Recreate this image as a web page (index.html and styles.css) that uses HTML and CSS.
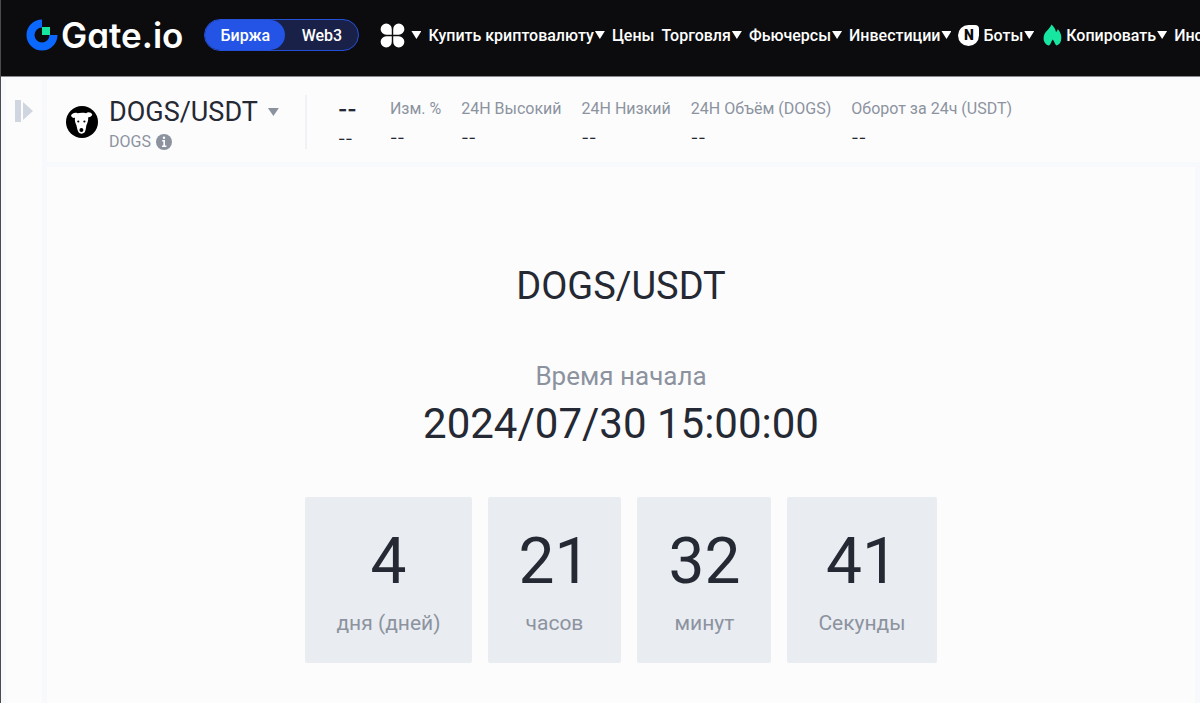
FILE: index.html
```html
<!DOCTYPE html>
<html lang="ru">
<head>
  <meta charset="UTF-8">
  <meta name="viewport" content="width=device-width, initial-scale=1.0">
  <title>DOGS/USDT | Gate.io</title>
  <link rel="stylesheet" href="styles.css">
</head>
<body>
  <header class="header">
    <a href="#" class="logo">
      <svg width="32" height="32" viewBox="0 0 32 32" aria-hidden="true">
        <path d="M16 0.5A15.5 15.5 0 1 0 31.5 16H23.5A7.5 7.5 0 1 1 16 8.5Z" fill="#0a68ff"/>
        <rect x="16" y="8" width="8" height="8" fill="#17e6a1"/>
      </svg>
      <span>Gate.io</span>
    </a>
    <div class="switch">
      <button type="button" class="switch-btn active">Биржа</button>
      <button type="button" class="switch-btn">Web3</button>
    </div>
    <nav class="nav">
      <a href="#" class="apps" aria-label="Меню">
        <svg width="25" height="25" viewBox="0 0 24 24" fill="#fff" aria-hidden="true">
          <path d="M6 0.5A5.3 5.3 0 0 1 11.3 6V11.3H6A5.4 5.4 0 0 1 6 0.5Z"/>
          <path d="M18 0.5A5.3 5.3 0 0 0 12.7 6V11.3H18A5.4 5.4 0 0 0 18 0.5Z"/>
          <path d="M6 23.5A5.3 5.3 0 0 0 11.3 18V12.7H6A5.4 5.4 0 0 0 6 23.5Z"/>
          <path d="M18 23.5A5.3 5.3 0 0 1 12.7 18V12.7H18A5.4 5.4 0 0 1 18 23.5Z"/>
        </svg>
        <i class="arrow"></i>
      </a>
      <a href="#">Купить криптовалюту<i class="arrow"></i></a>
      <a href="#">Цены</a>
      <a href="#">Торговля<i class="arrow"></i></a>
      <a href="#">Фьючерсы<i class="arrow"></i></a>
      <a href="#">Инвестиции<i class="arrow"></i></a>
      <a href="#"><span class="badge">N</span>Боты<i class="arrow"></i></a>
      <a href="#">
        <svg class="fire" width="19" height="22" viewBox="0 0 19 22" aria-hidden="true">
          <path d="M8.5 0.5C10.5 2 12.5 5 13 8C14 7.3 14.5 6.3 14.7 5C17 7.5 18.5 10.5 18.3 14C18.3 18 16.5 20.5 13.5 21.5C11.8 20.5 11.8 18 9.7 15.5C8 17.5 7.8 20.5 6 21.5C2.8 20.8 0.6 18 0.6 14.2C0.6 11.5 1.8 9 3.7 7C5.8 4.8 7.5 3 8.5 0.5Z" fill="#17e6a1"/>
        </svg>
        Копировать<i class="arrow"></i>
      </a>
      <a href="#">Институты<i class="arrow"></i></a>
    </nav>
  </header>

  <div class="page">
    <aside class="rail">
      <button type="button" class="expand" aria-label="Развернуть">
        <svg width="18" height="22" viewBox="0 0 18 22" fill="#d0d6df" aria-hidden="true">
          <rect width="6" height="22"/>
          <path d="M8 2L18 11L8 20Z"/>
        </svg>
      </button>
    </aside>

    <main class="main">
      <section class="ticker">
        <div class="pair">
          <svg class="coin" width="32" height="32" viewBox="0 0 32 32" aria-hidden="true">
            <circle cx="16" cy="16" r="16" fill="#000"/>
            <path d="M5 9.5C6.5 7 9 6.3 11.5 7.3C14 6.6 17.5 6.6 20 7.2C22 5.6 25 6 26.3 8.5C25.5 10.7 23.8 11.5 22.2 11.2C22.5 14.5 21.3 17 20.3 19.5C20 22 19.7 24.5 18.5 26.5C17 28 14 28 12.8 26.5C11.5 24.5 11 22 10.5 19.5C9.3 17 8.5 14.5 9 11.8C7.2 12.3 5.6 11.5 5 9.5Z" fill="#fff"/>
            <circle cx="12.3" cy="15.5" r="1.1"/>
            <circle cx="18.4" cy="15.5" r="1.1"/>
            <ellipse cx="15.4" cy="24" rx="2" ry="1.9"/>
          </svg>
          <div>
            <button type="button" class="pair-name">DOGS/USDT<i class="arrow"></i></button>
            <div class="pair-sub">
              DOGS
              <svg width="16" height="16" viewBox="0 0 16 16" aria-hidden="true">
                <circle cx="8" cy="8" r="8" fill="#8c939f"/>
                <path d="M6.2 6.7H8.2V12M6 12.2H10.4" stroke="#fff" stroke-width="1.6" fill="none"/>
                <circle cx="8" cy="3.8" r="1.2" fill="#fff"/>
              </svg>
            </div>
          </div>
        </div>
        <div class="price">
          <strong>--</strong>
          <span>--</span>
        </div>
        <dl class="stats">
          <div><dt>Изм. %</dt><dd>--</dd></div>
          <div><dt>24H Высокий</dt><dd>--</dd></div>
          <div><dt>24H Низкий</dt><dd>--</dd></div>
          <div><dt>24H Объём (DOGS)</dt><dd>--</dd></div>
          <div><dt>Оборот за 24ч (USDT)</dt><dd>--</dd></div>
        </dl>
      </section>

      <section class="launch">
        <h1>DOGS/USDT</h1>
        <p class="launch-label">Время начала</p>
        <p class="launch-date">2024/07/30 15:00:00</p>
        <div class="countdown">
          <div class="card"><b>4</b><span>дня (дней)</span></div>
          <div class="card"><b>21</b><span>часов</span></div>
          <div class="card"><b>32</b><span>минут</span></div>
          <div class="card"><b>41</b><span>Секунды</span></div>
        </div>
      </section>
    </main>
  </div>
</body>
</html>
```
FILE: styles.css
```css
* {
  box-sizing: border-box;
}

body {
  margin: 0;
  min-height: 100vh;
  display: flex;
  flex-direction: column;
  overflow-x: hidden;
  font-family: Roboto, "Noto Sans", sans-serif;
  color: #252933;
  background-color: #fcfcfd;
  border-left: 1px solid #4b4b50;
}

a {
  color: inherit;
  text-decoration: none;
}

button {
  border: none;
  padding: 0;
  background: none;
  font-family: inherit;
  color: inherit;
  cursor: pointer;
}

h1, p, dl, dd {
  margin: 0;
}

.arrow {
  display: inline-block;
  flex: none;
  width: 10px;
  height: 8px;
  margin-left: 1px;
  background-color: currentColor;
  clip-path: polygon(0 0, 100% 0, 50% 100%);
}

/* header */
.header {
  display: flex;
  align-items: center;
  height: 77px;
  padding: 0 0 6px 25px;
  overflow: hidden;
  white-space: nowrap;
  color: #fff;
  background-color: #0c0c0e;
  border-bottom: 1px solid #88888c;
}

.logo {
  display: flex;
  align-items: center;
  flex: none;
  gap: 3px;
  font-family: Inter, sans-serif;
  font-size: 35px;
  font-weight: 600;
  line-height: 40px;
  font-feature-settings: "cv11";
}

.switch {
  display: flex;
  flex: none;
  width: 155px;
  height: 32px;
  margin-left: 21px;
  border: 1px solid #2450d8;
  border-radius: 16px;
  background-color: #1a2149;
  overflow: hidden;
}

.switch-btn {
  flex: 1;
  font-size: 16px;
  font-weight: 500;
}

.switch-btn.active {
  flex: none;
  width: 80px;
  border-radius: 16px;
  background-color: #2354e6;
}

.nav {
  display: flex;
  align-items: center;
  flex: none;
  gap: 7px;
  margin-left: 21px;
  font-size: 16px;
  font-weight: 500;
}

.nav a {
  display: flex;
  align-items: center;
}

.apps .arrow {
  margin-left: 6px;
}

.badge {
  width: 21px;
  height: 21px;
  margin-right: 4px;
  border-radius: 50% 4px 50% 50%;
  font-size: 14px;
  font-weight: 900;
  line-height: 21px;
  text-align: center;
  color: #0c0c0e;
  background-color: #fff;
}

.fire {
  margin: 0 4px 0 2px;
}

/* page */
.page {
  display: flex;
  flex: 1;
  border-top: 3px solid #f8f9fc;
}

.rail {
  flex: none;
  width: 46px;
  padding: 20px 0 0 9px;
  border-left: 5px solid #f8f9fc;
  border-right: 5px solid #f8f9fc;
}

.main {
  flex: 1;
  display: flex;
  flex-direction: column;
  min-width: 0;
}

.ticker {
  display: flex;
  align-items: flex-start;
  height: 87px;
  padding: 15px 0 0 19px;
  border-bottom: 5px solid #f8f9fc;
  white-space: nowrap;
}

.pair {
  display: flex;
  gap: 11px;
  height: 54px;
  padding-right: 26px;
  border-right: 2px solid #f0f2f6;
}

.coin {
  margin-top: 11px;
}

.pair-name {
  display: flex;
  align-items: center;
  font-size: 27px;
  line-height: 34px;
}

.pair-name .arrow {
  width: 11px;
  margin-left: 10px;
  color: #8c939f;
}

.pair-sub {
  display: flex;
  align-items: center;
  gap: 5px;
  font-size: 16px;
  line-height: 26px;
  color: #8c939f;
}

.price {
  display: flex;
  flex-direction: column;
  width: 83px;
  padding-left: 31px;
  font-family: Inter, sans-serif;
  line-height: 29px;
}

.price strong {
  font-size: 20px;
}

.price span {
  font-size: 16px;
}

.stats {
  display: flex;
  gap: 20px;
  font-size: 16px;
  line-height: 28px;
}

.stats dt {
  color: #8c939f;
}

.stats dd {
  font-family: Inter, sans-serif;
}

.launch {
  flex: 1;
  display: flex;
  flex-direction: column;
  align-items: center;
  padding: 96px 0 40px;
  border-right: 5px solid #f8f9fc;
}

.launch h1 {
  font-size: 38px;
  font-weight: 400;
  line-height: 46px;
}

.launch-label {
  margin-top: 50px;
  font-size: 26px;
  line-height: 34px;
  color: #8c939f;
}

.launch-date {
  margin-top: 6px;
  font-size: 42px;
  line-height: 50px;
}

.countdown {
  display: flex;
  gap: 16px;
  margin-top: 48px;
}

.card {
  display: flex;
  flex-direction: column;
  align-items: center;
  height: 166px;
  padding: 28px 31px 0;
  border-radius: 2px;
  background-color: #e9ecf1;
}

.card b {
  font-size: 64px;
  font-weight: 400;
  line-height: 74px;
}

.card span {
  margin-top: 10px;
  font-size: 21px;
  line-height: 28px;
  color: #8c939f;
}
```
